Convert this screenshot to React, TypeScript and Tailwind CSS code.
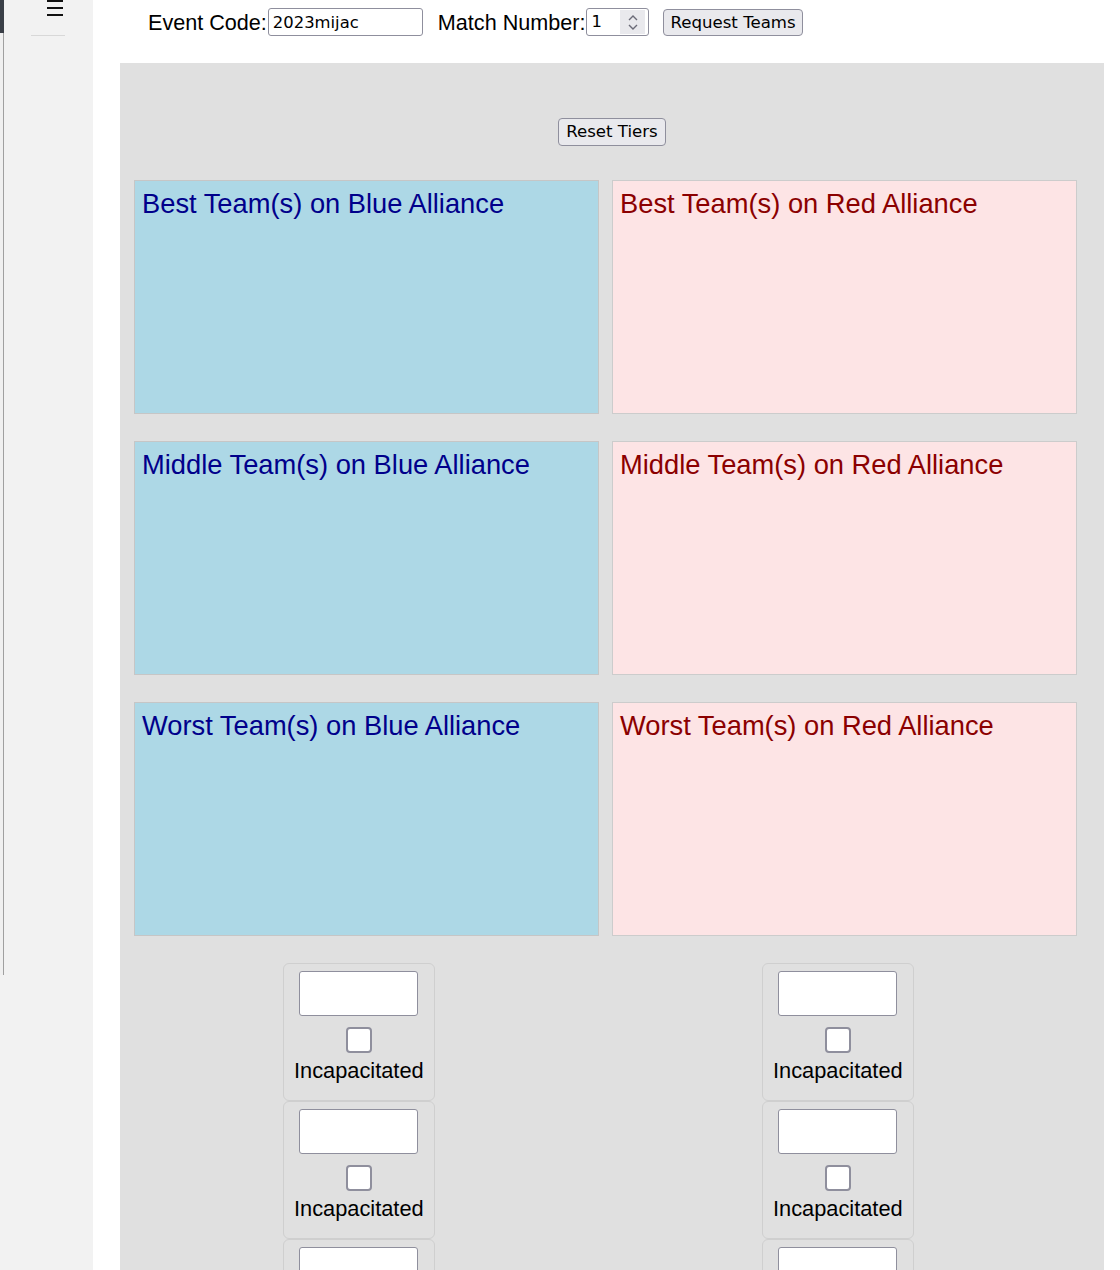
import React, { useState } from 'react';

const TIERS = ['Best', 'Middle', 'Worst'];

const sans = "font-['Liberation_Sans',Arial,sans-serif]";
const dejavu = "font-['DejaVu_Sans',sans-serif]";

const TeamCard = () => {
  const [incap, setIncap] = useState(false);
  return (
    <div className="border border-[#cfcfcf] rounded-[6px] pt-[7px] pb-[17px] px-[10px] flex flex-col items-center w-fit">
      <input
        type="text"
        className={`w-[119px] h-[45px] bg-white border border-[#8f8f9d] rounded-[3px] px-1 text-base ${dejavu}`}
      />
      <input
        type="checkbox"
        checked={incap}
        onChange={(e) => setIncap(e.target.checked)}
        className="appearance-none mt-[11px] w-[26px] h-[26px] bg-white border-2 border-[#8f8f9d] rounded-[4px] checked:bg-[#0060df]"
      />
      <span className={`mt-[5px] text-[21.8px] leading-[25px] text-black ${sans}`}>Incapacitated</span>
    </div>
  );
};

export default function App() {
  const [eventCode, setEventCode] = useState('2023mijac');
  const [matchNumber, setMatchNumber] = useState('1');

  return (
    <div className="h-[1270px] overflow-hidden flex bg-white">
      {/* left edge of the window behind */}
      <div className="w-[4px] shrink-0 flex flex-col">
        <div className="h-[33px] bg-[#3a3f47]" />
        <div className="h-[942px] bg-[#f0f0f0] border-r border-[#a0a0a0]" />
        <div className="flex-1 bg-[#f2f2f2]" />
      </div>

      {/* sidebar */}
      <div className="w-[89px] shrink-0 bg-[#f2f2f2] flex flex-col">
        <div className="flex flex-col gap-[5px] ml-[43px] w-[16px]">
          <div className="h-[2px] bg-[#111]" />
          <div className="h-[2px] bg-[#111]" />
          <div className="h-[2px] bg-[#111]" />
        </div>
        <div className="mt-[19px] ml-[27px] w-[34px] h-px bg-[#d8d8d8]" />
      </div>

      {/* main */}
      <div className="flex-1 flex flex-col">
        {/* request bar */}
        <div className={`h-[63px] shrink-0 pl-[55px] pt-[8px] flex items-start text-[21.6px] text-black ${sans}`}>
          <label className="flex items-center h-[28px]">
            <span className="mt-[2px]">Event Code:</span>
            <input
              type="text"
              value={eventCode}
              onChange={(e) => setEventCode(e.target.value)}
              className={`ml-px w-[155px] h-[28px] bg-white border border-[#8f8f9d] rounded-[3px] px-[4px] pt-px text-[16.4px] ${dejavu}`}
            />
          </label>
          <label className="flex items-center h-[28px] ml-[15px]">
            <span className="mt-[2px]">Match Number:</span>
            <div className="ml-px w-[63px] h-[28px] bg-white border border-[#8f8f9d] rounded-[3px] flex items-center">
              <input
                type="text"
                value={matchNumber}
                onChange={(e) => setMatchNumber(e.target.value)}
                className={`w-[30px] pl-[4px] pt-px text-[16.4px] bg-transparent ${dejavu}`}
              />
              <div className="ml-auto mr-[3px] w-[25px] h-[24px] bg-[#e9e9ed] flex flex-col items-center justify-center gap-[3px]">
                <svg width="10" height="6" viewBox="0 0 10 6" fill="none" stroke="#6b6b78" strokeWidth="1.4">
                  <path d="M1 5 L5 1 L9 5" />
                </svg>
                <svg width="10" height="6" viewBox="0 0 10 6" fill="none" stroke="#6b6b78" strokeWidth="1.4">
                  <path d="M1 1 L5 5 L9 1" />
                </svg>
              </div>
            </div>
          </label>
          <button
            className={`ml-[14px] mt-px h-[27px] px-[6px] pt-px bg-[#e9e9ed] border border-[#8f8f9d] rounded-[4px] text-[16.6px] text-black ${dejavu}`}
          >
            Request Teams
          </button>
        </div>

        {/* tier board */}
        <div className="flex-1 ml-[27px] mr-[16px] bg-[#e0e0e0] pt-[55px]">
          <div className="flex justify-center">
            <button
              className={`h-[28px] px-[7px] pt-px bg-[#e9e9ed] border border-[#8f8f9d] rounded-[4px] text-[16.6px] text-black ${dejavu}`}
            >
              Reset Tiers
            </button>
          </div>

          <div className="pl-[14px]">
            <div className="mt-[34px] grid grid-cols-[465px_465px] gap-x-[13px] gap-y-[27px]">
              {TIERS.map((tier) => (
                <React.Fragment key={tier}>
                  <div className="h-[234px] bg-[#add8e6] border border-[#c6c6c6] pt-[7px] px-[7px]">
                    <h2 className={`text-[27.3px] leading-[31px] text-[#00008b] ${sans}`}>
                      {tier} Team(s) on Blue Alliance
                    </h2>
                  </div>
                  <div className="h-[234px] bg-[#fde4e5] border border-[#cccccc] pt-[7px] px-[7px]">
                    <h2 className={`text-[27.3px] leading-[31px] text-[#8b0000] ${sans}`}>
                      {tier} Team(s) on Red Alliance
                    </h2>
                  </div>
                </React.Fragment>
              ))}
            </div>

            <div className="mt-[27px] grid grid-cols-[465px_465px] gap-x-[13px]">
              <div className="pl-[149px] flex flex-col">
                <TeamCard />
                <TeamCard />
                <TeamCard />
              </div>
              <div className="pl-[150px] flex flex-col">
                <TeamCard />
                <TeamCard />
                <TeamCard />
              </div>
            </div>
          </div>
        </div>
      </div>
    </div>
  );
}
